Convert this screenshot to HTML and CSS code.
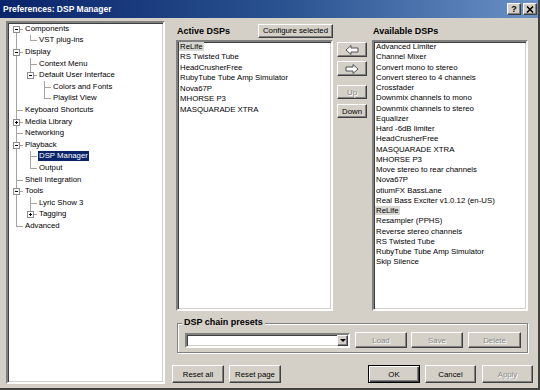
FILE: index.html
```html
<!DOCTYPE html>
<html>
<head>
<meta charset="utf-8">
<link rel="stylesheet" href="styles.css">
</head>
<body>
<div class="window">
  <div class="titlebar">
    <span class="title">Preferences: DSP Manager</span>
    <div class="tb-buttons">
      <span class="tbbtn q">?</span>
      <span class="tbbtn x"><svg width="8" height="7" viewBox="0 0 8 7"><path d="M1 0.5 L7 6.5 M7 0.5 L1 6.5" stroke="#000" stroke-width="1.6"/></svg></span>
    </div>
  </div>
  <div class="content">
    <div class="tree sunken">
      <div class="row"><span class="g first"><i class="box"></i></span><span class="t">Components</span></div>
      <div class="row"><span class="g pipe"></span><span class="g last"></span><span class="t">VST plug-ins</span></div>
      <div class="row"><span class="g tee"><i class="box"></i></span><span class="t">Display</span></div>
      <div class="row"><span class="g pipe"></span><span class="g tee"></span><span class="t">Context Menu</span></div>
      <div class="row"><span class="g pipe"></span><span class="g last"><i class="box"></i></span><span class="t">Default User Interface</span></div>
      <div class="row"><span class="g pipe"></span><span class="g"></span><span class="g tee"></span><span class="t">Colors and Fonts</span></div>
      <div class="row"><span class="g pipe"></span><span class="g"></span><span class="g last"></span><span class="t">Playlist View</span></div>
      <div class="row"><span class="g tee"></span><span class="t">Keyboard Shortcuts</span></div>
      <div class="row"><span class="g tee"><i class="box plus"></i></span><span class="t">Media Library</span></div>
      <div class="row"><span class="g tee"></span><span class="t">Networking</span></div>
      <div class="row"><span class="g tee"><i class="box"></i></span><span class="t">Playback</span></div>
      <div class="row"><span class="g pipe"></span><span class="g tee"></span><span class="t sel">DSP Manager</span></div>
      <div class="row"><span class="g pipe"></span><span class="g last"></span><span class="t">Output</span></div>
      <div class="row"><span class="g tee"></span><span class="t">Shell Integration</span></div>
      <div class="row"><span class="g tee"><i class="box"></i></span><span class="t">Tools</span></div>
      <div class="row"><span class="g pipe"></span><span class="g tee"></span><span class="t">Lyric Show 3</span></div>
      <div class="row"><span class="g pipe"></span><span class="g last"><i class="box plus"></i></span><span class="t">Tagging</span></div>
      <div class="row"><span class="g last"></span><span class="t">Advanced</span></div>
    </div>
    <div class="main">
      <div class="lists">
        <div class="col active-col">
          <div class="col-head">
            <span class="label">Active DSPs</span>
            <span class="btn cfg">Configure selected</span>
          </div>
          <div class="listbox sunken">
            <div class="item"><span class="hl">ReLife</span></div>
            <div class="item"><span>RS Twisted Tube</span></div>
            <div class="item"><span>HeadCrusherFree</span></div>
            <div class="item"><span>RubyTube Tube Amp Simulator</span></div>
            <div class="item"><span>Nova67P</span></div>
            <div class="item"><span>MHORSE P3</span></div>
            <div class="item"><span>MASQUARADE XTRA</span></div>
          </div>
        </div>
        <div class="mid">
          <span class="btn arrow"><svg width="14" height="10" viewBox="0 0 14 10"><path d="M1 5 L6 0.5 L6 3 L13 3 L13 7 L6 7 L6 9.5 Z" fill="#fff" stroke="#505050" stroke-width="1" stroke-linejoin="miter"/></svg></span>
          <span class="btn arrow"><svg width="14" height="10" viewBox="0 0 14 10"><path d="M13 5 L8 0.5 L8 3 L1 3 L1 7 L8 7 L8 9.5 Z" fill="#fff" stroke="#505050" stroke-width="1" stroke-linejoin="miter"/></svg></span>
          <span class="btn disabled up">Up</span>
          <span class="btn down">Down</span>
        </div>
        <div class="col avail-col">
          <div class="col-head">
            <span class="label">Available DSPs</span>
          </div>
          <div class="listbox sunken avail">
            <div class="item"><span>Advanced Limiter</span></div>
            <div class="item"><span>Channel Mixer</span></div>
            <div class="item"><span>Convert mono to stereo</span></div>
            <div class="item"><span>Convert stereo to 4 channels</span></div>
            <div class="item"><span>Crossfader</span></div>
            <div class="item"><span>Downmix channels to mono</span></div>
            <div class="item"><span>Downmix channels to stereo</span></div>
            <div class="item"><span>Equalizer</span></div>
            <div class="item"><span>Hard -6dB limiter</span></div>
            <div class="item"><span>HeadCrusherFree</span></div>
            <div class="item"><span>MASQUARADE XTRA</span></div>
            <div class="item"><span>MHORSE P3</span></div>
            <div class="item"><span>Move stereo to rear channels</span></div>
            <div class="item"><span>Nova67P</span></div>
            <div class="item"><span>otiumFX BassLane</span></div>
            <div class="item"><span>Real Bass Exciter v1.0.12 (en-US)</span></div>
            <div class="item"><span class="hl">ReLife</span></div>
            <div class="item"><span>Resampler (PPHS)</span></div>
            <div class="item"><span>Reverse stereo channels</span></div>
            <div class="item"><span>RS Twisted Tube</span></div>
            <div class="item"><span>RubyTube Tube Amp Simulator</span></div>
            <div class="item"><span>Skip Silence</span></div>
          </div>
        </div>
      </div>
      <div class="group">
        <span class="legend">DSP chain presets</span>
        <div class="combo sunken"><span class="drop"><i class="tri"></i></span></div>
        <span class="btn disabled gbtn load">Load</span>
        <span class="btn disabled gbtn save">Save</span>
        <span class="btn disabled gbtn del">Delete</span>
      </div>
      <div class="bottom">
        <span class="btn bbtn">Reset all</span>
        <span class="btn bbtn rp">Reset page</span>
        <span class="btn bbtn default ok">OK</span>
        <span class="btn bbtn cancel">Cancel</span>
        <span class="btn bbtn disabled apply">Apply</span>
      </div>
    </div>
  </div>
</div>
</body>
</html>
```
FILE: styles.css
```css
* { box-sizing: border-box; }
html, body { margin: 0; padding: 0; }
body {
  width: 540px;
  height: 390px;
  overflow: hidden;
  background: #d4d0c8;
  font-family: "Liberation Sans", Arial, sans-serif;
  font-size: 7.8px;
  color: #000;
}
.window {
  width: 540px;
  height: 390px;
  display: flex;
  flex-direction: column;
  border-right: 2px solid #404040;
  border-bottom: 2px solid #404040;
  background: #d4d0c8;
}
.titlebar {
  height: 18px;
  flex: none;
  display: flex;
  align-items: center;
  background: linear-gradient(to right, #0a246a 0%, #2c5592 55%, #6a90c6 100%);
  padding-left: 3px;
}
.title {
  color: #fff;
  font-weight: bold;
  font-size: 8.5px;
  flex: 1;
}
.tb-buttons { display: flex; gap: 1px; margin-right: 1px; }
.tbbtn {
  width: 14px;
  height: 12px;
  background: #d4d0c8;
  border: 1px solid;
  border-color: #fff #404040 #404040 #fff;
  box-shadow: inset -1px -1px #808080;
  display: flex;
  align-items: center;
  justify-content: center;
  font-weight: bold;
  font-size: 9px;
  line-height: 1;
}
.tbbtn.x { margin-left: 1px; }
.content {
  flex: 1;
  display: flex;
  padding: 3px 0 0 6px;
}
.sunken {
  border: 2px solid;
  border-color: #808080 #fff #fff #808080;
  box-shadow: inset 1px 1px #404040, inset -1px -1px #d4d0c8;
  background: #fff;
}
.tree {
  width: 159px;
  height: 363px;
  flex: none;
  padding: 0 0 0 1px;
  overflow: hidden;
}
.row {
  display: flex;
  align-items: center;
  height: 11.6px;
  white-space: nowrap;
}
.g {
  width: 14px;
  height: 100%;
  flex: none;
  position: relative;
}
.g.pipe::before, .g.tee::before, .g.first::before, .g.last::before {
  content: "";
  position: absolute;
  left: 7px;
  width: 1px;
  top: 0;
  bottom: 0;
  background: #a4a4a4;
}
.g.first::before { top: 50%; }
.g.last::before { bottom: 50%; }
.g.tee::after, .g.first::after, .g.last::after {
  content: "";
  position: absolute;
  left: 7px;
  top: 50%;
  width: 7px;
  height: 1px;
  background: #a4a4a4;
}
.box {
  position: absolute;
  z-index: 1;
  left: 4px;
  top: calc(50% - 3px);
  width: 7px;
  height: 7px;
  border: 1px solid #8c8c8c;
  background: #fff;
}
.box::before {
  content: "";
  position: absolute;
  left: 1px;
  top: 2px;
  width: 3px;
  height: 1px;
  background: #000;
}
.box.plus::after {
  content: "";
  position: absolute;
  left: 2px;
  top: 1px;
  width: 1px;
  height: 3px;
  background: #000;
}
.t {
  margin-left: 1px;
  padding: 0 1px;
  line-height: 10px;
}
.t.sel {
  background: #0a246a;
  color: #fff;
}
.main {
  width: 361px;
  margin-left: 7px;
  display: flex;
  flex-direction: column;
}
.lists {
  height: 290px;
  display: flex;
  padding-left: 4px;
}
.col {
  display: flex;
  flex-direction: column;
}
.active-col { width: 157px; }
.avail-col { width: 156px; margin-left: 5px; }
.col-head {
  height: 19px;
  display: flex;
  align-items: center;
  justify-content: space-between;
  flex: none;
}
.label {
  font-weight: bold;
  font-size: 9px;
  margin-left: 1px;
}
.btn {
  background: #d4d0c8;
  border: 1px solid;
  border-color: #fff #404040 #404040 #fff;
  box-shadow: inset -1px -1px #808080;
  display: flex;
  align-items: center;
  justify-content: center;
  color: #000;
  white-space: nowrap;
  flex: none;
}
.btn.disabled {
  color: #8a8a8a;
  text-shadow: 1px 1px #fff;
}
.btn.default {
  border: 1px solid #000;
  box-shadow: inset 1px 1px #fff, inset -1px -1px #404040, inset -2px -2px #808080;
}
.cfg { width: 75px; height: 14px; }
.listbox {
  flex: 1;
  padding: 0 0 0 1px;
  overflow: hidden;
}
.item {
  height: 10.45px;
  line-height: 10.45px;
  white-space: nowrap;
}
.avail .item {
  height: 10.25px;
  line-height: 10.25px;
}
.item span { padding: 0 1px; }
.item .hl { background: #d9d7d2; }
.mid {
  width: 30px;
  margin-left: 4px;
  padding-top: 21px;
  display: flex;
  flex-direction: column;
}
.mid .btn { height: 15px; }
.mid .arrow + .arrow { margin-top: 4px; }
.mid .up { margin-top: 9px; height: 14px; }
.mid .down { margin-top: 5px; height: 14px; }
.group {
  position: relative;
  margin: 12px 0 0 5px;
  width: 351px;
  height: 30px;
  border: 1px solid #808080;
  box-shadow: 1px 1px 0 #fff, inset 1px 1px 0 #fff;
  display: flex;
  align-items: flex-start;
  padding: 8px 0 0 7px;
}
.legend {
  position: absolute;
  top: -7px;
  left: 4px;
  padding: 0 2px;
  background: #d4d0c8;
  font-weight: bold;
  font-size: 9px;
}
.combo {
  width: 165px;
  height: 15px;
  margin-top: 1px;
  display: flex;
  justify-content: flex-end;
  padding: 0;
}
.drop {
  width: 11px;
  height: 11px;
  background: #d4d0c8;
  border: 1px solid;
  border-color: #fff #404040 #404040 #fff;
  box-shadow: inset -1px -1px #808080;
  display: flex;
  align-items: center;
  justify-content: center;
}
.tri {
  width: 0;
  height: 0;
  border-left: 3px solid transparent;
  border-right: 3px solid transparent;
  border-top: 3px solid #000;
}
.gbtn { height: 16px; width: 52px; margin-left: 5px; }
.gbtn.save { margin-left: 4px; }
.gbtn.del { width: 53px; }
.bottom {
  margin-top: 12px;
  height: 18px;
  display: flex;
}
.bbtn { width: 52px; height: 18px; }
.bbtn.rp { margin-left: 5px; }
.bbtn.ok { margin-left: auto; }
.bbtn.cancel { margin-left: 5px; width: 51px; }
.bbtn.apply { margin-left: 6px; width: 51px; }
```
